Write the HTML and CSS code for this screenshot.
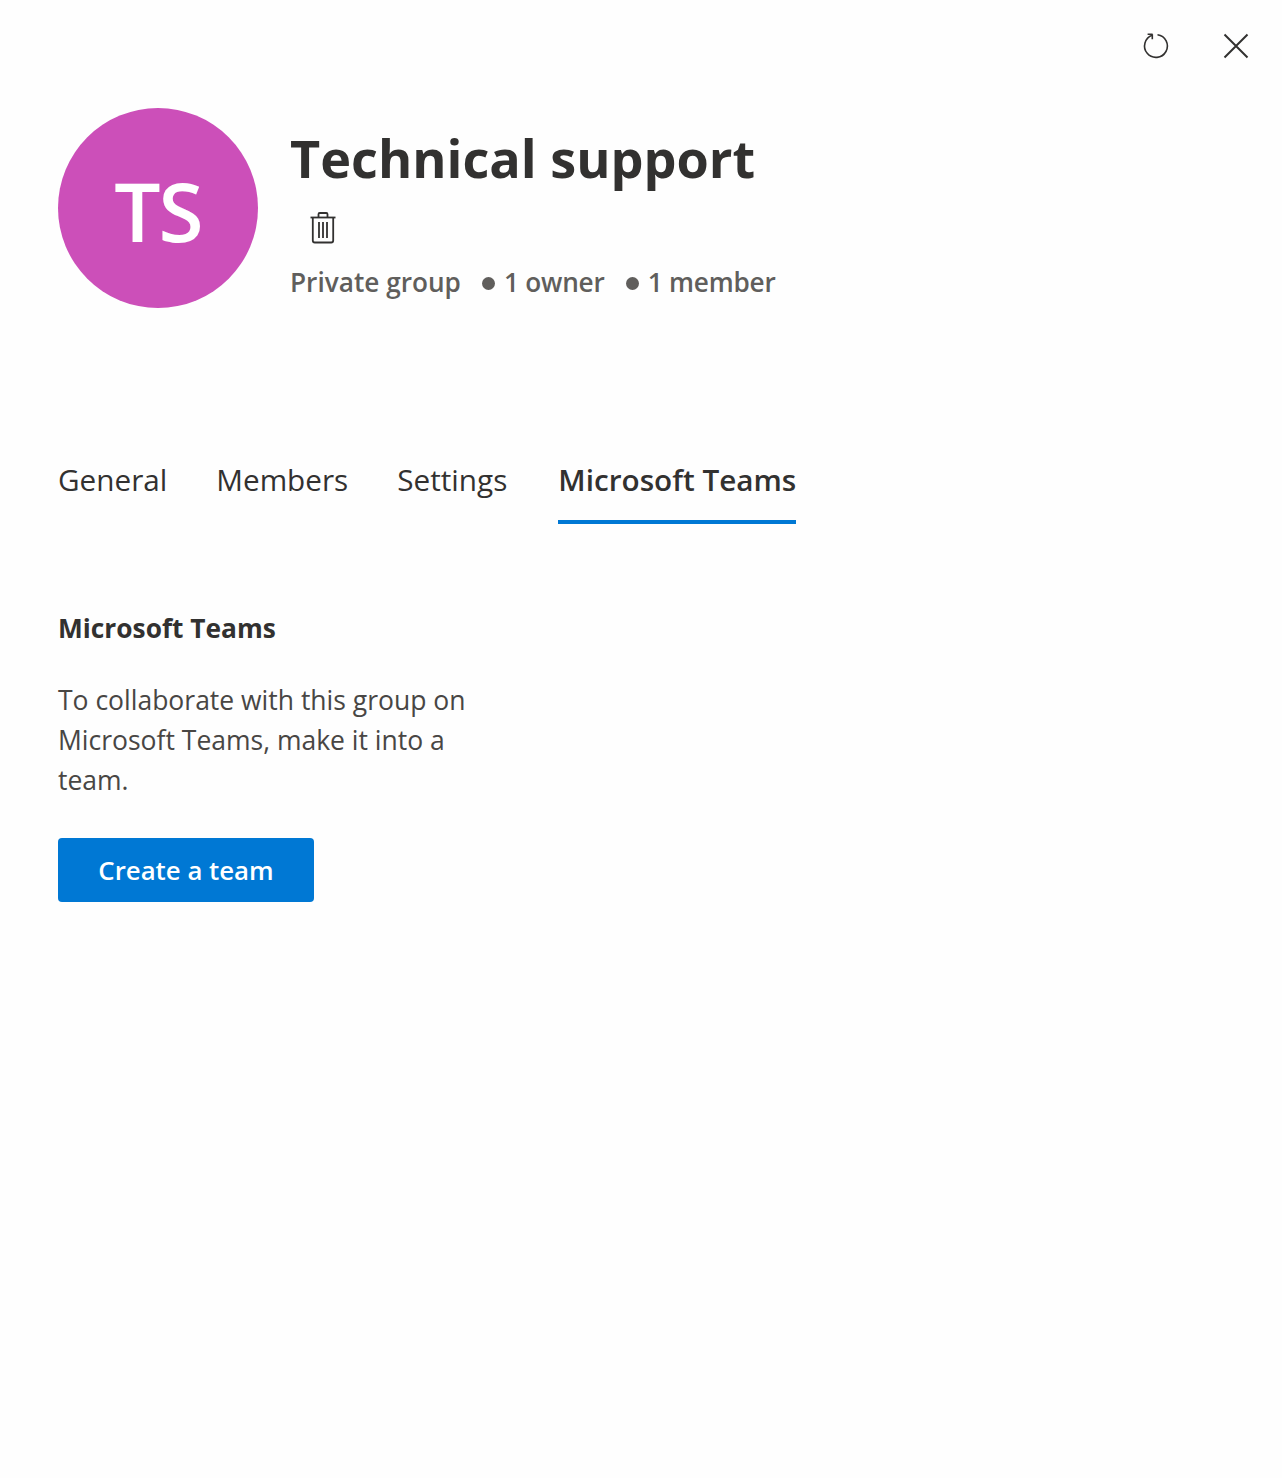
FILE: index.html
```html
<!DOCTYPE html>
<html lang="en">
<head>
  <meta charset="UTF-8">
  <title>Technical support</title>
  <link rel="stylesheet" href="styles.css">
</head>
<body>
<div class="top-actions">
  <button class="icon-btn" aria-label="Refresh">
    <svg width="28" height="28" viewBox="0 0 28 28" fill="none" stroke="#323130" stroke-width="1.6">
      <path d="M10.3 3.2 A11.4 11.4 0 1 0 15.5 2.7"/>
      <path d="M5.6 2.3 H10.6 M10.3 2.3 V7.2"/>
    </svg>
  </button>
  <button class="icon-btn" aria-label="Close">
    <svg width="28" height="28" viewBox="0 0 28 28" fill="none" stroke="#323130" stroke-width="2">
      <path d="M2.5 2.5 L25.5 25.5 M25.5 2.5 L2.5 25.5"/>
    </svg>
  </button>
</div>

<header class="group-header">
  <div class="avatar">TS</div>
  <div class="group-info">
    <h1>Technical support</h1>
    <div class="group-tools">
      <svg width="28" height="34" viewBox="0 0 28 34" fill="none" stroke="#323130" stroke-width="1.8">
        <path d="M1.5 6.5 H26.5"/>
        <path d="M9.5 6 V3.2 Q9.5 2 10.7 2 H17.3 Q18.5 2 18.5 3.2 V6"/>
        <path d="M3.8 6.5 V29.5 Q3.8 31.5 5.8 31.5 H22.2 Q24.2 31.5 24.2 29.5 V6.5"/>
        <path d="M10 11 V27 M14 11 V27 M18 11 V27"/>
      </svg>
    </div>
    <div class="group-meta">
      <span>Private group</span>
      <span class="meta-item">1 owner</span>
      <span class="meta-item">1 member</span>
    </div>
  </div>
</header>

<nav class="tabs">
  <a class="tab">General</a>
  <a class="tab">Members</a>
  <a class="tab">Settings</a>
  <a class="tab active">Microsoft Teams</a>
</nav>

<section class="content">
  <h2>Microsoft Teams</h2>
  <p>To collaborate with this group on Microsoft Teams, make it into a team.</p>
  <button class="primary-btn">Create a team</button>
</section>
</body>
</html>
```

FILE: styles.css
```css
body {
  margin: 0;
  padding: 0 58px;
  min-height: 1478px;
  box-sizing: border-box;
  background-color: #fefefe;
  color: #323130;
  font-family: "Open Sans", sans-serif;
}

.top-actions {
  display: flex;
  justify-content: flex-end;
  gap: 52px;
  padding-top: 32px;
  margin-right: -26px;
  height: 76px;
}

.icon-btn {
  background: none;
  border: none;
  padding: 0;
  width: 28px;
  height: 28px;
  cursor: pointer;
}

.group-header {
  display: flex;
  gap: 32px;
  height: 200px;
}

.avatar {
  width: 200px;
  height: 200px;
  border-radius: 50%;
  background-color: #cc4fb9;
  color: #ffffff;
  display: flex;
  align-items: center;
  justify-content: center;
  padding-top: 4px;
  box-sizing: border-box;
  font-size: 82px;
  font-weight: 600;
  letter-spacing: -2px;
}

.group-info h1 {
  margin: 17px 0 0;
  font-size: 52.2px;
  line-height: 66px;
  font-weight: 700;
}

.group-tools {
  height: 36px;
  padding: 3px 0 0 19px;
  margin-top: 17px;
}

.group-meta {
  display: flex;
  margin-top: 17px;
  font-size: 26.2px;
  line-height: 36px;
  font-weight: 600;
  color: #605e5c;
}

.meta-item {
  margin-left: 21px;
  display: flex;
  align-items: center;
  letter-spacing: -0.2px;
}

.meta-item::before {
  content: "";
  width: 13px;
  height: 13px;
  border-radius: 50%;
  background-color: #605e5c;
  margin-right: 9px;
  margin-top: 3px;
}

.tabs {
  display: flex;
  gap: 49px;
  margin-top: 151px;
}

.tab {
  font-size: 29.7px;
  line-height: 42px;
  padding-bottom: 19px;
  border-bottom: 4px solid transparent;
  color: #323130;
}

.tab.active {
  margin-left: 2px;
  font-weight: 600;
  border-bottom-color: #0078d4;
}

.content {
  width: 430px;
  padding-top: 84px;
}

.content h2 {
  margin: 0;
  font-size: 26.3px;
  line-height: 40px;
  font-weight: 700;
}

.content p {
  margin: 32px 0 0;
  font-size: 26.5px;
  line-height: 40px;
  color: #484644;
}

.primary-btn {
  margin-top: 38px;
  width: 256px;
  height: 64px;
  background-color: #0078d4;
  color: #ffffff;
  border: none;
  border-radius: 4px;
  font-family: inherit;
  font-size: 25.8px;
  font-weight: 600;
  cursor: pointer;
}
```
